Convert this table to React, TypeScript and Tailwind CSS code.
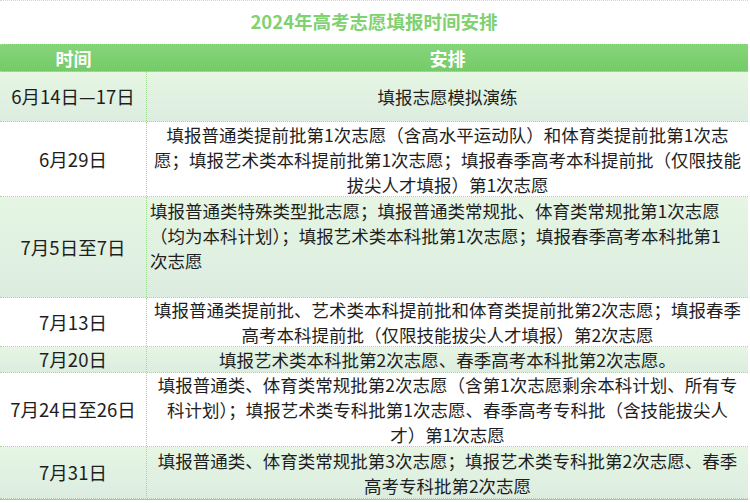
import React from 'react';

type Row = {
  date: string;
  lines: string[];
  h: string;
  shade: boolean;
  align?: 'left' | 'center';
};

const rows: Row[] = [
  { date: '6月14日—17日', lines: ['填报志愿模拟演练'], h: 'h-[50px]', shade: true },
  {
    date: '6月29日',
    lines: [
      '填报普通类提前批第1次志愿（含高水平运动队）和体育类提前批第1次志',
      '愿；填报艺术类本科提前批第1次志愿；填报春季高考本科提前批（仅限技能',
      '拔尖人才填报）第1次志愿',
    ],
    h: 'h-[75px]',
    shade: false,
  },
  {
    date: '7月5日至7日',
    lines: [
      '填报普通类特殊类型批志愿；填报普通类常规批、体育类常规批第1次志愿',
      '（均为本科计划）；填报艺术类本科批第1次志愿；填报春季高考本科批第1',
      '次志愿',
    ],
    h: 'h-[101px]',
    shade: true,
    align: 'left',
  },
  {
    date: '7月13日',
    lines: [
      '填报普通类提前批、艺术类本科提前批和体育类提前批第2次志愿；填报春季',
      '高考本科提前批（仅限技能拔尖人才填报）第2次志愿',
    ],
    h: 'h-[49px]',
    shade: false,
  },
  {
    date: '7月20日',
    lines: ['填报艺术类本科批第2次志愿、春季高考本科批第2次志愿。'],
    h: 'h-[26px]',
    shade: true,
  },
  {
    date: '7月24日至26日',
    lines: [
      '填报普通类、体育类常规批第2次志愿（含第1次志愿剩余本科计划、所有专',
      '科计划）；填报艺术类专科批第1次志愿、春季高考专科批（含技能拔尖人',
      '才）第1次志愿',
    ],
    h: 'h-[74px]',
    shade: false,
  },
  {
    date: '7月31日',
    lines: [
      '填报普通类、体育类常规批第3次志愿；填报艺术类专科批第2次志愿、春季',
      '高考专科批第2次志愿',
    ],
    h: 'h-[52px]',
    shade: true,
  },
];

const App = () => {
  return (
    <div className="w-[750px] h-[503px] bg-white overflow-hidden font-['Microsoft_YaHei','Noto_Sans_CJK_SC',sans-serif] text-[#1e1e1e]">
      <div className="w-[748px]">
        {/* Title */}
        <div className="h-[44px] flex items-center justify-center pb-[2px] border-t border-dotted border-[#d4d4d4]">
          <h1 className="text-[18.5px] font-bold text-[#80d170]">2024年高考志愿填报时间安排</h1>
        </div>

        {/* Header */}
        <div className="h-[28px] flex bg-gradient-to-b from-[#86d47a] to-[#74cb67] text-white font-bold text-[18px] border-y border-dotted border-[#a6df9a]">
          <div className="w-[147px] flex items-center justify-center">时间</div>
          <div className="flex-1 flex items-center justify-center">安排</div>
        </div>

        {/* Rows */}
        {rows.map((row) => (
          <div
            key={row.date}
            className={`${row.h} flex border-b border-dotted border-[#9fdc92] text-[17.5px] leading-[25px] ${
              row.shade ? 'bg-gradient-to-b from-[#e6f6e3] to-[#dcece0]' : 'bg-white'
            }`}
          >
            <div className="w-[147px] shrink-0 flex items-center justify-center border-r border-dotted border-[#9fdc92] whitespace-nowrap text-[18.5px]">
              {row.date}
            </div>
            <div
              className={`flex-1 flex flex-col whitespace-nowrap overflow-hidden ${
                row.align === 'left' ? 'items-start justify-start pl-[3px] pt-[1px]' : 'items-center justify-center'
              }`}
            >
              {row.lines.map((l) => (
                <span key={l}>{l}</span>
              ))}
            </div>
          </div>
        ))}
        <div className="h-[1px] bg-[#8fda80]" />
      </div>
    </div>
  );
};

export default App;
